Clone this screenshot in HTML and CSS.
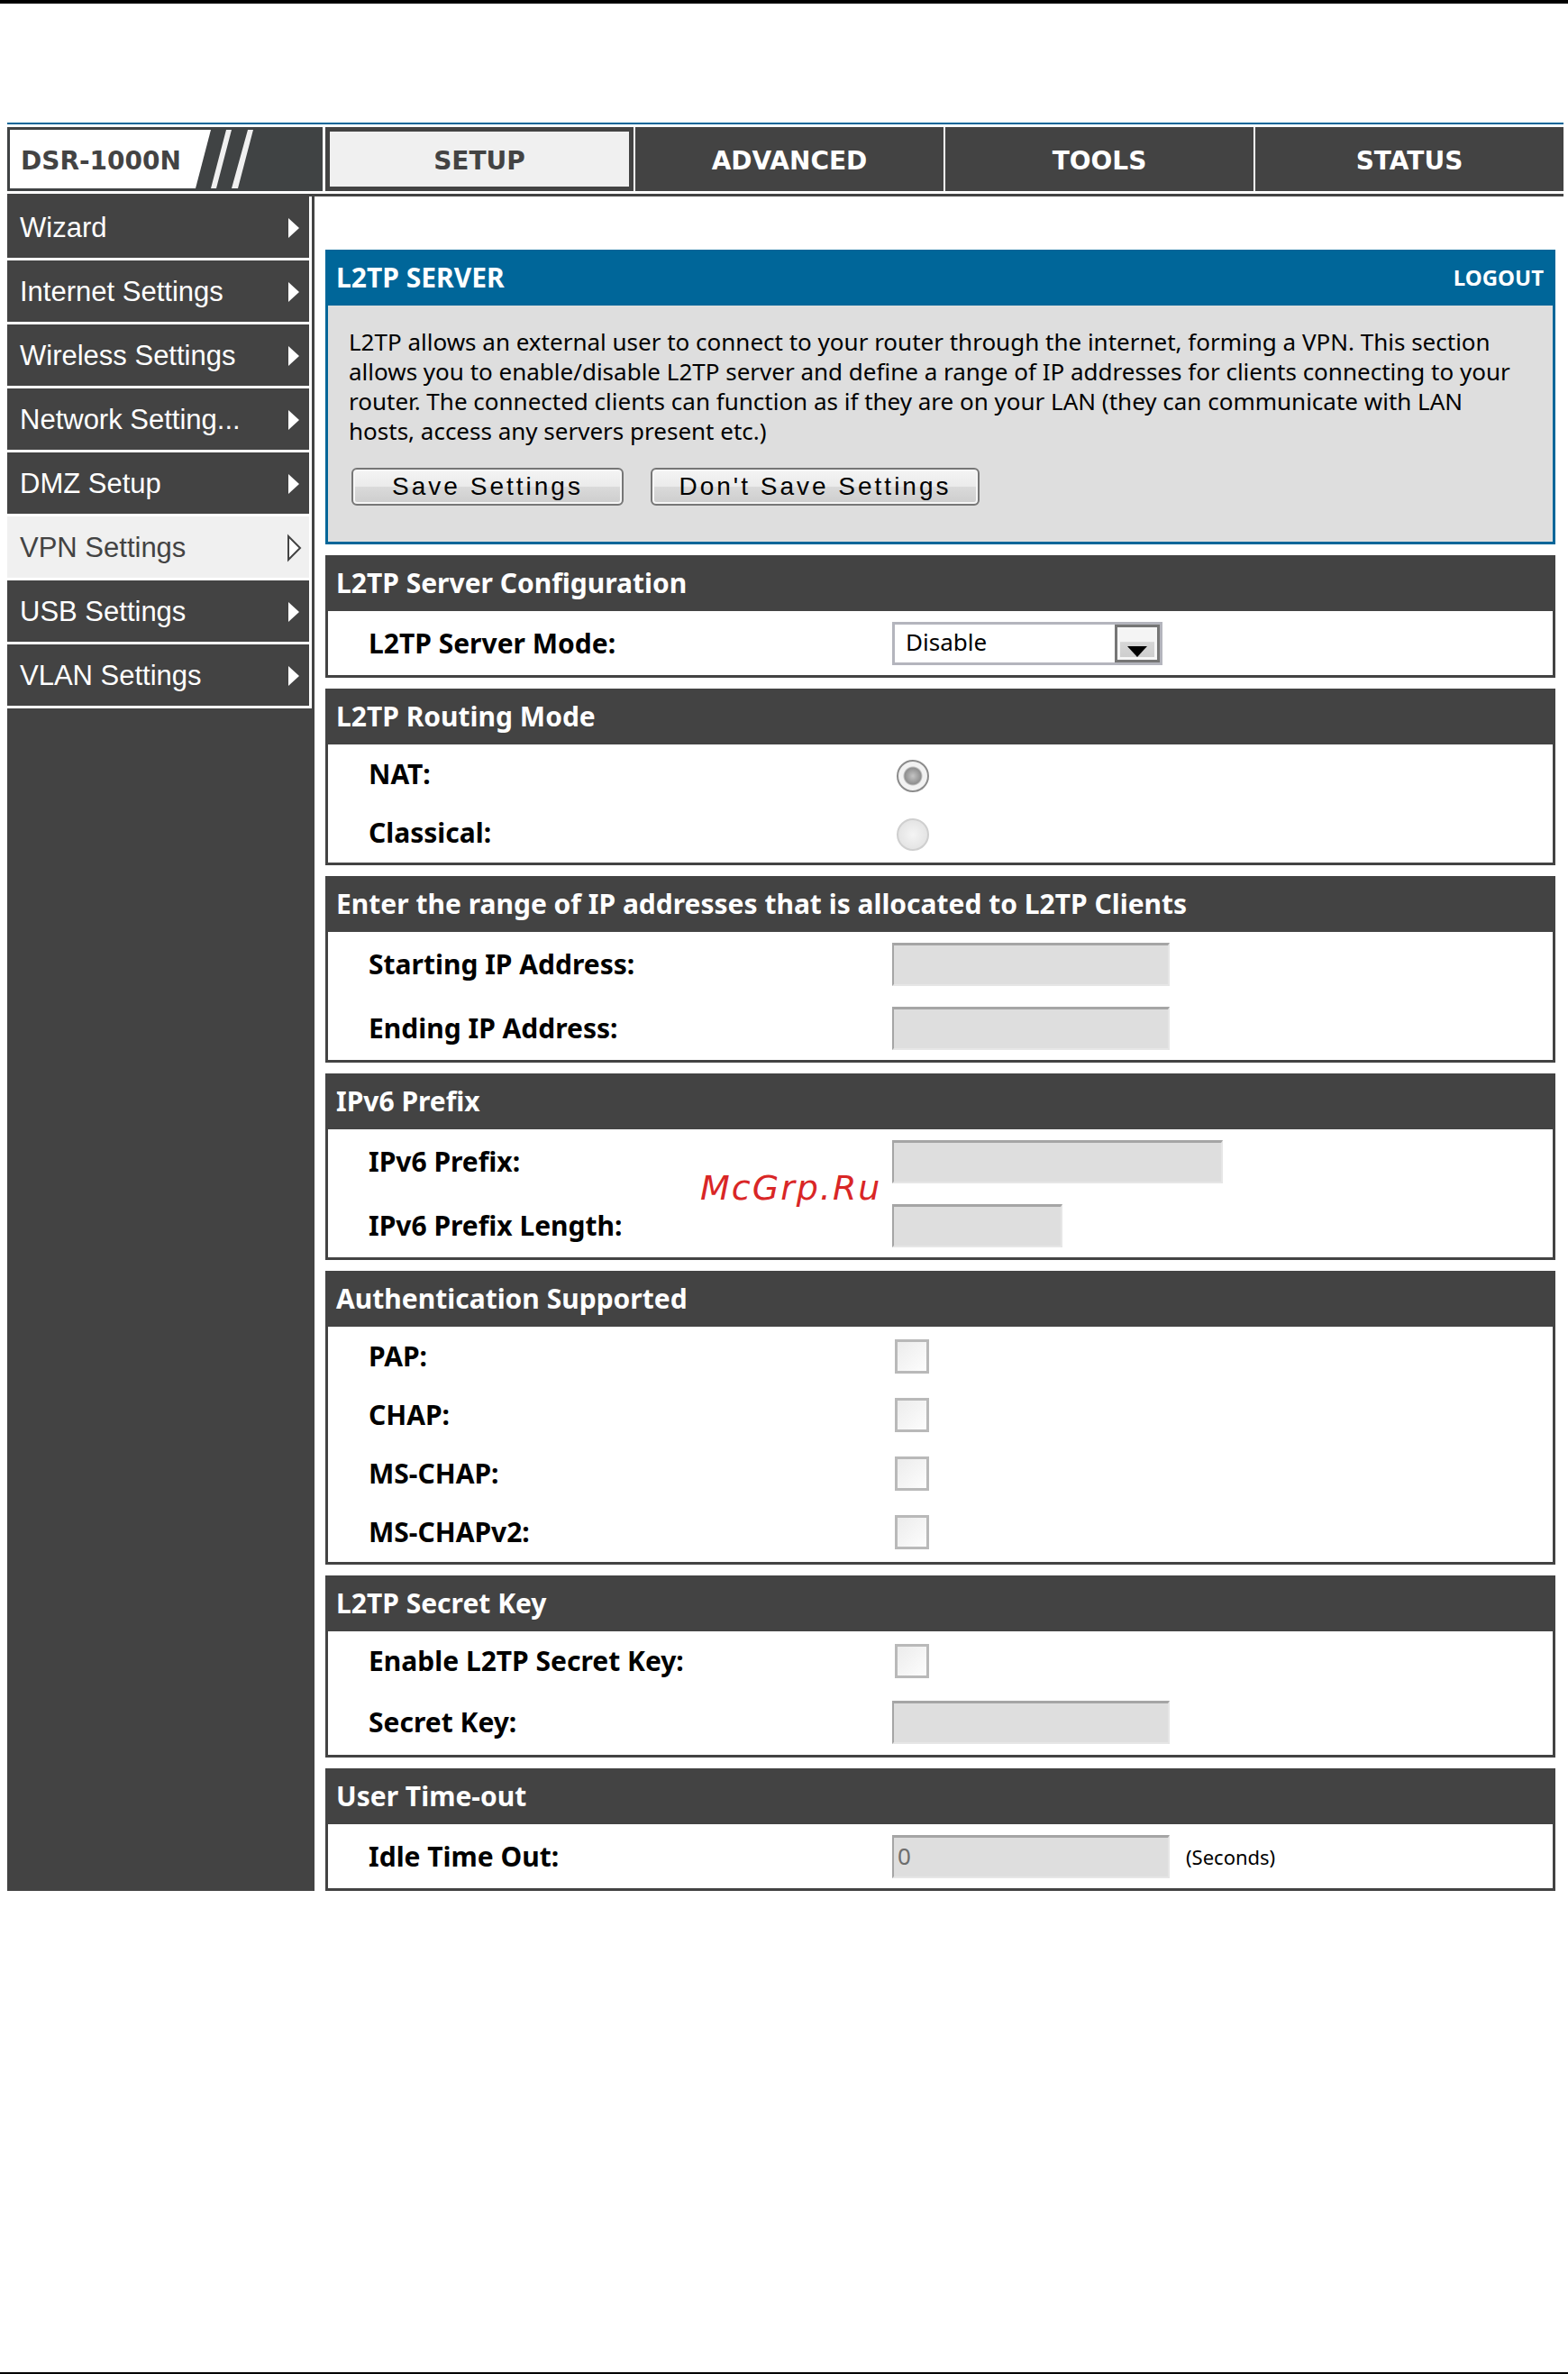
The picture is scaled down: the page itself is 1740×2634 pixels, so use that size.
FILE: index.html
```html
<!DOCTYPE html>
<html lang="en">
<head>
    <meta charset="UTF-8">
    <title>DSR-1000N - L2TP Server</title>
    <link rel="stylesheet" href="styles.css">
</head>
<body>
    <div class="router">
        <header class="topbar">
            <div class="model">
                <svg class="model-bg" viewBox="0 0 350 71" preserveAspectRatio="none" aria-hidden="true">
                    <path d="M3 3H226L209 68H3Z" fill="#fff"/>
                    <path d="M243 3H249L232 68H226ZM267 3H273L256 68H249Z" fill="#f0f0f0"/>
                </svg>
                <span>DSR-1000N</span>
            </div>
            <nav class="tabs">
                <a href="#" class="tab active">SETUP</a>
                <a href="#" class="tab">ADVANCED</a>
                <a href="#" class="tab">TOOLS</a>
                <a href="#" class="tab">STATUS</a>
            </nav>
        </header>

        <div class="layout">
            <aside class="sidebar">
                <nav class="menu">
                    <a href="#">Wizard <svg viewBox="0 0 12 22"><path d="M0 0L12 11L0 22Z"/></svg></a>
                    <a href="#">Internet Settings <svg viewBox="0 0 12 22"><path d="M0 0L12 11L0 22Z"/></svg></a>
                    <a href="#">Wireless Settings <svg viewBox="0 0 12 22"><path d="M0 0L12 11L0 22Z"/></svg></a>
                    <a href="#">Network Setting... <svg viewBox="0 0 12 22"><path d="M0 0L12 11L0 22Z"/></svg></a>
                    <a href="#">DMZ Setup <svg viewBox="0 0 12 22"><path d="M0 0L12 11L0 22Z"/></svg></a>
                    <a href="#" class="active">VPN Settings <svg viewBox="0 0 12 22"><path d="M0 -2L13 11L0 24Z"/></svg></a>
                    <a href="#">USB Settings <svg viewBox="0 0 12 22"><path d="M0 0L12 11L0 22Z"/></svg></a>
                    <a href="#">VLAN Settings <svg viewBox="0 0 12 22"><path d="M0 0L12 11L0 22Z"/></svg></a>
                </nav>
            </aside>

            <main class="content">
                <section class="panel intro">
                    <div class="panel-title">
                        <h1>L2TP SERVER</h1>
                        <a href="#" class="logout">LOGOUT</a>
                    </div>
                    <div class="intro-body">
                        <p>L2TP allows an external user to connect to your router through the internet, forming a VPN. This section allows you to enable/disable L2TP server and define a range of IP addresses for clients connecting to your router. The connected clients can function as if they are on your LAN (they can communicate with LAN hosts, access any servers present etc.)</p>
                        <div class="buttons">
                            <button type="submit" form="l2tp-form" class="save">Save Settings</button>
                            <button type="reset" form="l2tp-form" class="cancel">Don't Save Settings</button>
                        </div>
                    </div>
                </section>

                <form id="l2tp-form" class="panels">
                    <section class="panel">
                        <h2 class="panel-title">L2TP Server Configuration</h2>
                        <div class="row">
                            <label for="mode">L2TP Server Mode:</label>
                            <div class="select-box">
                                <select id="mode">
                                    <option>Disable</option>
                                    <option>Enable</option>
                                </select>
                                <span class="select-arrow"></span>
                            </div>
                        </div>
                    </section>

                    <section class="panel choices">
                        <h2 class="panel-title">L2TP Routing Mode</h2>
                        <div class="row choice">
                            <label for="nat">NAT:</label>
                            <input type="radio" id="nat" name="routing" checked disabled>
                        </div>
                        <div class="row choice">
                            <label for="classical">Classical:</label>
                            <input type="radio" id="classical" name="routing" disabled>
                        </div>
                    </section>

                    <section class="panel">
                        <h2 class="panel-title">Enter the range of IP addresses that is allocated to L2TP Clients</h2>
                        <div class="row">
                            <label for="start-ip">Starting IP Address:</label>
                            <input type="text" id="start-ip" disabled>
                        </div>
                        <div class="row">
                            <label for="end-ip">Ending IP Address:</label>
                            <input type="text" id="end-ip" disabled>
                        </div>
                    </section>

                    <section class="panel">
                        <h2 class="panel-title">IPv6 Prefix</h2>
                        <div class="row">
                            <label for="prefix">IPv6 Prefix:</label>
                            <input type="text" id="prefix" class="wide" disabled>
                        </div>
                        <div class="row">
                            <label for="prefix-length">IPv6 Prefix Length:</label>
                            <input type="text" id="prefix-length" class="short" disabled>
                        </div>
                        <span class="watermark">McGrp.Ru</span>
                    </section>

                    <section class="panel choices">
                        <h2 class="panel-title">Authentication Supported</h2>
                        <div class="row choice">
                            <label for="pap">PAP:</label>
                            <input type="checkbox" id="pap" disabled>
                        </div>
                        <div class="row choice">
                            <label for="chap">CHAP:</label>
                            <input type="checkbox" id="chap" disabled>
                        </div>
                        <div class="row choice">
                            <label for="ms-chap">MS-CHAP:</label>
                            <input type="checkbox" id="ms-chap" disabled>
                        </div>
                        <div class="row choice">
                            <label for="ms-chapv2">MS-CHAPv2:</label>
                            <input type="checkbox" id="ms-chapv2" disabled>
                        </div>
                    </section>

                    <section class="panel choices">
                        <h2 class="panel-title">L2TP Secret Key</h2>
                        <div class="row choice">
                            <label for="enable-key">Enable L2TP Secret Key:</label>
                            <input type="checkbox" id="enable-key" disabled>
                        </div>
                        <div class="row">
                            <label for="secret-key">Secret Key:</label>
                            <input type="text" id="secret-key" disabled>
                        </div>
                    </section>

                    <section class="panel">
                        <h2 class="panel-title">User Time-out</h2>
                        <div class="row">
                            <label for="idle">Idle Time Out:</label>
                            <input type="text" id="idle" value="0" disabled>
                            <span class="unit">(Seconds)</span>
                        </div>
                    </section>
                </form>
            </main>
        </div>
    </div>
</body>
</html>
```

FILE: styles.css
```css
* {
    box-sizing: border-box;
}
body {
    margin: 0;
    min-height: 100vh;
    padding: 132px 5px 0 8px;
    border-top: 4px solid #000;
    border-bottom: 2px solid #000;
    background: #fff;
    color: #000;
    font-family: "Noto Sans", Tahoma, sans-serif;
    font-size: 26px;
}
a {
    color: inherit;
    text-decoration: none;
}

/* Top bar */
.topbar {
    display: flex;
    gap: 3px;
    padding: 3px 0;
    border-top: 2px solid #006699;
    font-family: "DejaVu Sans", Verdana, sans-serif;
    font-size: 28px;
    font-weight: bold;
}
.model {
    position: relative;
    display: flex;
    align-items: center;
    width: 350px;
    height: 71px;
    padding: 4px 0 0 15px;
    background: #404344;
    color: #434343;
}
.model-bg {
    position: absolute;
    inset: 0;
    width: 100%;
    height: 100%;
}
.model span {
    position: relative;
}
.tabs {
    flex: 1;
    display: flex;
    gap: 2px;
}
.tab {
    flex: 1;
    display: flex;
    align-items: center;
    justify-content: center;
    padding-top: 4px;
    background: #434343;
    color: #fff;
}
.tab.active {
    background: #f0f0f0;
    box-shadow: inset 0 0 0 5px #434343;
    color: #434343;
}

/* Left menu */
.layout {
    display: flex;
    border-top: 3px solid #434343;
}
.sidebar {
    width: 341px;
    background: #434343;
}
.menu {
    display: flex;
    flex-direction: column;
    gap: 3px;
    width: 338px;
    background: #fff;
    border-right: 3px solid #fff;
    border-bottom: 3px solid #fff;
    font-family: "Liberation Sans", Arial, sans-serif;
    font-size: 31px;
}
.menu a {
    display: flex;
    align-items: center;
    justify-content: space-between;
    height: 68px;
    padding: 2px 11px 0 14px;
    background: #434343;
    color: #fff;
}
.menu a.active {
    background: #f0f0f0;
    color: #434343;
}
.menu svg {
    width: 12px;
    height: 22px;
    fill: #fff;
}
.menu .active svg {
    overflow: visible;
    stroke: #434343;
    stroke-width: 2;
}

/* Panels */
.content {
    flex: 1;
    padding: 59px 9px 0 12px;
}
.panels {
    display: flex;
    flex-direction: column;
    gap: 12px;
    margin-top: 12px;
}
.panel {
    position: relative;
    border: solid #434343;
    border-width: 0 3px 3px;
}
.panel.choices {
    padding-bottom: 1px;
}
.panel-title {
    display: flex;
    align-items: center;
    justify-content: space-between;
    height: 62px;
    margin: 0;
    padding: 0 10px 2px 9px;
    background: #434343;
    color: #fff;
    font-size: 30px;
    font-weight: bold;
}
.panel-title h1 {
    margin: 0;
    font-size: 30px;
}
.intro {
    border-color: #006699;
}
.intro .panel-title {
    background: #006699;
}
.logout {
    font-size: 24px;
}
.intro-body {
    padding: 24px 23px 40px;
    background: #dedede;
}
.intro-body p {
    margin: 0;
    line-height: 33px;
}
.buttons {
    display: flex;
    gap: 30px;
    margin-top: 24px;
    padding-left: 3px;
}
.buttons button {
    height: 42px;
    padding: 0;
    border: 2px solid #767676;
    border-radius: 6px;
    background: linear-gradient(#f4f4f4 0%, #ebebeb 50%, #dadada 51%, #cdcdcd 100%);
    box-shadow: inset 0 0 0 2px #f6f6f6;
    color: #000;
    font-family: "Liberation Sans", Arial, sans-serif;
    font-size: 28px;
    letter-spacing: 3px;
}
.buttons .save {
    width: 302px;
}
.buttons .cancel {
    width: 365px;
}

/* Form rows */
.row {
    display: flex;
    align-items: center;
    height: 71px;
    padding-left: 45px;
}
.row.choice {
    height: 65px;
}
.row label {
    width: 581px;
    font-size: 30px;
    font-weight: bold;
}
input[type="text"] {
    width: 308px;
    height: 48px;
    padding: 0 4px 3px;
    border: solid #e6e6e6;
    border-top-color: #a5a5a5;
    border-left-color: #a5a5a5;
    border-width: 3px 2px 2px;
    background: #dedede;
    color: #6d6d6d;
    font-family: inherit;
    font-size: 26px;
}
input.wide {
    width: 367px;
}
input.short {
    width: 189px;
}
input[type="radio"],
input[type="checkbox"] {
    appearance: none;
    width: 38px;
    height: 38px;
    margin: 0 0 0 3px;
    border: 3px solid #b9b9b9;
    background: linear-gradient(135deg, #ececec, #fdfdfd);
}
input[type="radio"] {
    width: 36px;
    height: 36px;
    margin: 4px 0 0 5px;
    border: 2px solid #cfcfcf;
    border-radius: 50%;
    background: radial-gradient(circle, #f4f4f4, #dedede);
}
input[type="radio"]:checked {
    border-color: #8c8c8c;
    background: radial-gradient(circle, #c4c4c4 0, #8f8f8f 9px, #f2f2f2 11px);
}
.select-box {
    position: relative;
}
select {
    display: block;
    appearance: none;
    width: 300px;
    height: 48px;
    padding: 0 12px 3px;
    border: 3px solid #b4b5bd;
    border-radius: 0;
    background: #fff;
    color: #000;
    font-family: inherit;
    font-size: 26px;
}
.select-arrow {
    position: absolute;
    top: 3px;
    right: 3px;
    width: 50px;
    height: 42px;
    border: 3px solid #767676;
    background: linear-gradient(#f4f4f4 45%, #d6d6d6 46%, #cdcdcd);
    box-shadow: inset 0 0 0 3px #f6f6f6;
    pointer-events: none;
}
.select-arrow::after {
    content: "";
    position: absolute;
    top: 21px;
    left: 11px;
    border: solid transparent;
    border-width: 12px 11px 0;
    border-top-color: #000;
}
.unit {
    margin-left: 18px;
    font-size: 22px;
}
.watermark {
    position: absolute;
    top: 105px;
    left: 413px;
    color: #d92626;
    font-family: "DejaVu Sans", Verdana, sans-serif;
    font-size: 38px;
    font-style: italic;
    letter-spacing: 2px;
}
```
